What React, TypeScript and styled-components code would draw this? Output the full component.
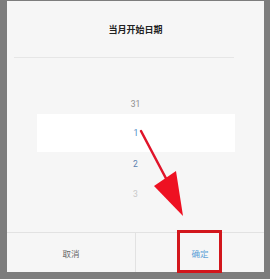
import React from "react";
import styled, { createGlobalStyle } from "styled-components";

const Global = createGlobalStyle`
  html, body { margin: 0; padding: 0; }
  body { font-family: "Noto Sans CJK SC", "Noto Sans", sans-serif; background: #7d7d7d; }
`;

const Page = styled.div`
  position: relative;
  width: 270px;
  height: 279px;
  box-sizing: border-box;
  padding: 1px 6px 7px 7px;
  background: #7d7d7d;
  display: flex;
`;

const Dialog = styled.div`
  flex: 1;
  display: flex;
  flex-direction: column;
  background: #f6f6f6;
`;

const Title = styled.div`
  height: 56px;
  display: flex;
  align-items: center;
  justify-content: center;
  font-size: 9px;
  font-weight: 700;
  color: #222;
`;

const Divider = styled.div`
  height: 1px;
  margin: 0 30px 0 7px;
  background: #e6e6e6;
`;

const Picker = styled.div`
  flex: 1;
  display: flex;
  flex-direction: column;
  padding-top: 31px;
`;

const Row = styled.div<{ $tone: string; $selected?: boolean }>`
  height: ${(p) => (p.$selected ? 38 : 30)}px;
  margin: ${(p) => (p.$selected ? "-5px 29px -3px 30px" : "0")};
  background: ${(p) => (p.$selected ? "#ffffff" : "transparent")};
  display: flex;
  align-items: center;
  justify-content: center;
  font-family: "Roboto", "Noto Sans", sans-serif;
  font-size: 8.5px;
  color: ${(p) => p.$tone};
  position: relative;
  z-index: ${(p) => (p.$selected ? 0 : 1)};
`;

const Footer = styled.div`
  height: 39px;
  border-top: 1px solid #e2e2e2;
  display: grid;
  grid-template-columns: 129px 1fr;
`;

const FooterButton = styled.div<{ $primary?: boolean; $divider?: boolean }>`
  display: flex;
  align-items: center;
  justify-content: center;
  font-size: 8.5px;
  color: ${(p) => (p.$primary ? "#5c9fd6" : "#666")};
  border-right: ${(p) => (p.$divider ? "1px solid #e2e2e2" : "none")};
`;

const Highlight = styled.div`
  position: absolute;
  left: 177px;
  top: 230px;
  width: 45px;
  height: 43px;
  box-sizing: border-box;
  border: 3px solid #d2161c;
`;

const ArrowLayer = styled.svg`
  position: absolute;
  left: 0;
  top: 0;
  pointer-events: none;
`;

export default function App() {
  return (
    <>
      <Global />
      <Page>
        <Dialog>
          <Title>当月开始日期</Title>
          <Divider />
          <Picker>
            <Row $tone="#8e8e8e">31</Row>
            <Row $tone="#4a8cc4" $selected>
              1
            </Row>
            <Row $tone="#5a7fae">2</Row>
            <Row $tone="#c8c8c8">3</Row>
          </Picker>
          <Footer>
            <FooterButton $divider>取消</FooterButton>
            <FooterButton $primary>确定</FooterButton>
          </Footer>
        </Dialog>
        <Highlight />
        <ArrowLayer width="270" height="279" viewBox="0 0 270 279">
          <line x1="141" y1="131" x2="170" y2="186" stroke="#e0142a" strokeWidth="2.5" strokeLinecap="round" />
          <polygon points="154,186 176,171 183,216" fill="#ee1122" />
        </ArrowLayer>
      </Page>
    </>
  );
}
